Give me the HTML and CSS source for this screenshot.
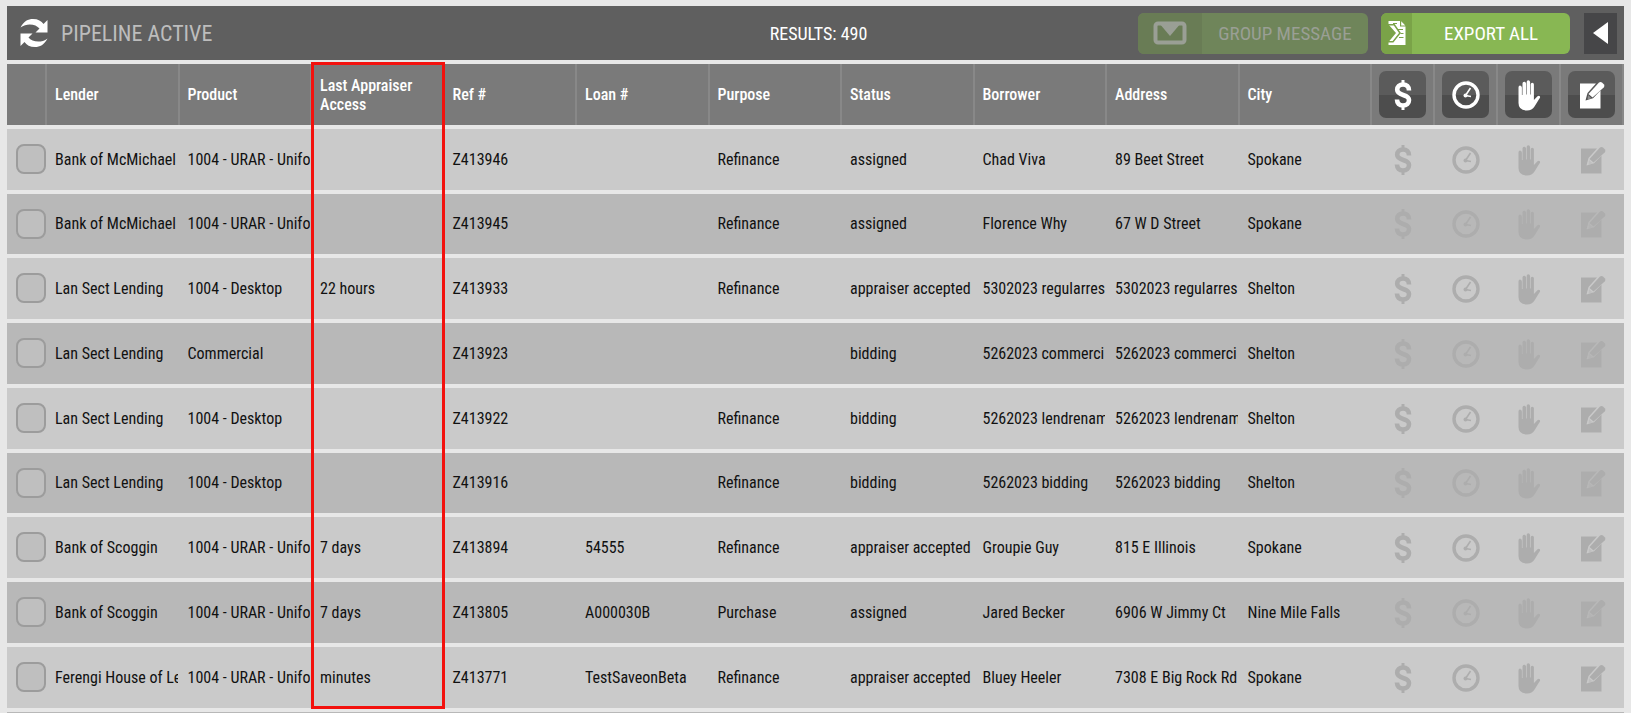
FILE: index.html
```html
<!DOCTYPE html>
<html lang="en">
<head>
  <meta charset="UTF-8" />
  <meta name="viewport" content="width=device-width, initial-scale=1.0"/>
  <title>Pipeline Active</title>
  <link rel="stylesheet" href="styles.css">
</head>
<body>
  <!-- Icons -->
  <svg class="sprite" aria-hidden="true">
    <symbol id="icon-dollar" viewBox="0 0 32 32">
      <path d="M22 11.5C22 7.5 19.5 5.5 16 5.5S10.200 7.700 10.200 10.800C10.200 17.500 22 14.500 22 21C22 24.500 19.500 26.500 16 26.500S10 24.500 10 20.500" fill="none" stroke="currentColor" stroke-width="4.600"/>
      <path d="M16 1v5M16 26v5" stroke="currentColor" stroke-width="3"/>
    </symbol>
    <symbol id="icon-clock" viewBox="0 0 32 32">
      <circle cx="16" cy="16" r="12" fill="none" stroke="currentColor" stroke-width="3.400"/>
      <path d="M20.500 9L15.500 16.500L21 17.500" fill="none" stroke="currentColor" stroke-width="1.600"/>
      <circle cx="15.500" cy="16.500" r="2" fill="currentColor"/>
    </symbol>
    <symbol id="icon-hand" viewBox="0 0 32 32">
      <path d="M5.500 8.500Q5.500 6.500 7 6.500T8.900 8.500V16H9.500V4.500Q9.500 2.700 11.200 2.700T13.100 4.500V15.500H13.700V3Q13.700 1.200 15.300 1.200T17.100 3V15.500H17.700V5.500Q17.700 3.700 19.300 3.700T20.900 5.500V21L24.500 17.300Q26 16.300 26.800 17.300T26.300 19.800L21.500 27.500Q19 31.500 14 31.500Q5.500 31.500 5.500 24Z" fill="currentColor"/>
    </symbol>
    <symbol id="icon-edit" viewBox="0 0 32 32">
      <path d="M4 4.500H20L11.500 14L9.500 21.500L17 19.300L24.500 11.500V29.500H4Z" fill="currentColor"/>
      <path d="M22.800 3.800Q24.300 2.300 26 3.600L28 5.500Q29 7 27.700 8.400L16.500 18.600L12.500 15Z" fill="currentColor"/>
      <path d="M12 16l3.500 3.200l-4 1.300z" fill="currentColor" opacity=".35"/>
    </symbol>
  </svg>

  <div class="pipeline">
    <!-- Top Bar -->
    <header class="topbar">
      <div class="topbar-left">
        <button class="refresh-btn" type="button" aria-label="Refresh">
          <svg viewBox="0 0 28 28">
            <path d="M0.500 8.500C4 2 8 0 13 0C18 0 21.500 2 23.500 5L27.500 1V13.500H15.500L19.500 9.500C16 5 7 3.500 0.500 8.500Z" fill="currentColor"/>
            <path d="M27.500 19.500C24 26 20 28 15 28C10 28 6.500 26 4.500 23L0.500 27V14.500H12.500L8.500 18.500C12 23 21 24.500 27.500 19.500Z" fill="currentColor"/>
          </svg>
        </button>
        <h1>PIPELINE ACTIVE</h1>
      </div>
      <div class="results">RESULTS: 490</div>
      <div class="topbar-right">
        <button class="action-btn group-btn" type="button" disabled>
          <span class="action-icon">
            <svg width="34" height="24" viewBox="0 0 34 24">
              <rect x="2.500" y="2.500" width="29" height="19" rx="2.500" fill="none" stroke="currentColor" stroke-width="4"/>
              <path d="M6 2h22L17 15Z" fill="currentColor"/>
            </svg>
          </span>
          <span class="action-text">GROUP MESSAGE</span>
        </button>
        <button class="action-btn export-btn" type="button">
          <span class="action-icon">
            <svg width="18" height="24" viewBox="0 0 18 24">
              <path d="M0.500 0H12V5.500H17.500V24H0.500V21L8 12L0.500 3.500Z" fill="currentColor"/>
              <path d="M13.200 0.300L17.300 4.400H13.200Z" fill="currentColor"/>
              <path d="M0 3.800H6.300L12 12L5 20.800H0" fill="none" stroke="#7aa348" stroke-width="1.500"/>
              <path d="M9 8.500h6M12.500 12.500h3M11 16.500h4.500M5 2.500h4" fill="none" stroke="#7aa348"/>
            </svg>
          </span>
          <span class="action-text">EXPORT ALL</span>
        </button>
        <button class="collapse-btn" type="button" aria-label="Collapse">
          <svg width="15" height="22" viewBox="0 0 15 22"><path d="M15 0V22L0 11Z" fill="currentColor"/></svg>
        </button>
      </div>
    </header>

    <!-- Orders -->
    <table class="orders">
      <colgroup>
        <col class="col-check">
        <col span="10">
        <col class="col-icon" span="3">
        <col class="col-last">
      </colgroup>
      <thead>
        <tr>
          <th></th>
          <th>Lender</th>
          <th>Product</th>
          <th class="highlighted">Last Appraiser Access<span class="highlight"></span></th>
          <th>Ref #</th>
          <th>Loan #</th>
          <th>Purpose</th>
          <th>Status</th>
          <th>Borrower</th>
          <th>Address</th>
          <th>City</th>
          <th class="icon-cell"><button class="head-btn" type="button" aria-label="Payment"><svg><use href="#icon-dollar"/></svg></button></th>
          <th class="icon-cell"><button class="head-btn" type="button" aria-label="Due"><svg><use href="#icon-clock"/></svg></button></th>
          <th class="icon-cell"><button class="head-btn" type="button" aria-label="Hold"><svg><use href="#icon-hand"/></svg></button></th>
          <th class="icon-cell"><button class="head-btn" type="button" aria-label="Notes"><svg><use href="#icon-edit"/></svg></button></th>
        </tr>
      </thead>
      <tbody id="orders-body"></tbody>
    </table>
  </div>

  <script src="script.js"></script>
</body>
</html>
```
FILE: styles.css
```css
* {
  box-sizing: border-box;
}

body {
  margin: 0;
  padding: 6px 7px 0;
  height: 100vh;
  overflow: hidden;
  background: #e7e7e7;
  color: #111;
  font-family: "Roboto Condensed", "Liberation Sans Narrow", Roboto, sans-serif;
  font-size: 16px;
}

button {
  border: none;
  padding: 0;
  font-family: inherit;
  cursor: pointer;
}

.sprite {
  display: none;
}

/* Top bar */
.topbar {
  display: grid;
  grid-template-columns: 1fr auto 1fr;
  align-items: center;
  height: 54px;
  padding: 0 7px 0 13px;
  background: #5f5f5f;
  color: #fff;
}

.topbar-left {
  display: flex;
  align-items: center;
  gap: 13px;
}

.refresh-btn {
  width: 28px;
  height: 28px;
  background: none;
  color: #fff;
}

.refresh-btn svg {
  display: block;
  width: 28px;
  height: 28px;
}

h1 {
  margin: 0;
  font-size: 22px;
  font-weight: 400;
  color: #bdbdbd;
}

.results {
  font-size: 18px;
}

.topbar-right {
  display: flex;
  justify-content: flex-end;
}

.action-btn {
  display: flex;
  height: 41px;
  border-radius: 6px;
  overflow: hidden;
  background: #88b753;
  color: #fff;
  font-size: 19px;
}

.action-icon {
  display: flex;
  align-items: center;
  justify-content: center;
  width: 31px;
  height: 100%;
  background: #7aa348;
}

.action-text {
  flex: 1;
  align-self: center;
  text-align: center;
  white-space: nowrap;
}

.group-btn {
  width: 230px;
  margin-right: 13px;
  background: #6f855a;
  color: #9a9f95;
  cursor: default;
}

.group-btn .action-icon {
  width: 64px;
  background: #697c55;
}

.export-btn {
  width: 189px;
  margin-right: 14px;
}

.collapse-btn {
  display: flex;
  align-items: center;
  justify-content: center;
  width: 33px;
  height: 41px;
  background: #464648;
  color: #fff;
}

/* Orders table */
.orders {
  width: 100%;
  table-layout: fixed;
  border-collapse: separate;
  border-spacing: 0 4px;
}

.col-check {
  width: 38px;
}

.col-icon {
  width: 63px;
}

.col-last {
  width: 65px;
}

th,
td {
  height: 61px;
  text-align: left;
  vertical-align: middle;
}

th {
  padding: 0 0 0 8px;
  border-left: 2px solid #888;
  background: #7a7a7a;
  color: #fff;
  font-weight: 500;
  line-height: 19px;
}

th:first-child {
  border-left: none;
}

th:last-child {
  border-right: 2px solid #888;
}

td {
  padding: 0 0 1px 10px;
  overflow: hidden;
  white-space: nowrap;
  background: #cacaca;
}

td:first-child {
  padding-left: 9px;
  overflow: visible;
}

tbody tr:nth-child(even) td {
  background: #b8b8b8;
}

tbody tr:nth-child(4n + 2) td {
  height: 60px;
}

th.icon-cell {
  padding: 0;
  text-align: center;
}

td.icon-cell {
  padding: 0 0 0 3px;
  text-align: center;
}

/* Frame around the appraiser access column */
.highlighted {
  position: relative;
}

.highlight {
  position: absolute;
  top: -2px;
  left: -1px;
  right: -2px;
  height: 647px;
  border: 3px solid #f3110d;
  pointer-events: none;
}

.head-btn {
  display: inline-flex;
  align-items: center;
  justify-content: center;
  width: 47px;
  height: 47px;
  border-radius: 7px;
  background: linear-gradient(#5b5b5b 50%, #4d4d4d 50%);
  color: #fff;
  vertical-align: middle;
}

.head-btn svg,
.row-btn svg {
  display: block;
  width: 32px;
  height: 32px;
}

.row-btn {
  display: inline-block;
  background: none;
  color: #adadad;
  vertical-align: middle;
}

.row-check {
  appearance: none;
  display: block;
  position: relative;
  width: 30px;
  height: 30px;
  margin: 0;
  border: 2px solid #9c9c9c;
  border-radius: 8px;
  background: #bfbfbf;
}
```
FILE: script.js
```js
const orders = [
  ["Bank of McMichael", "1004 - URAR - Unifo", "", "Z413946", "", "Refinance", "assigned", "Chad Viva", "89 Beet Street", "Spokane"],
  ["Bank of McMichael", "1004 - URAR - Unifo", "", "Z413945", "", "Refinance", "assigned", "Florence Why", "67 W D Street", "Spokane"],
  ["Lan Sect Lending", "1004 - Desktop", "22 hours", "Z413933", "", "Refinance", "appraiser accepted", "5302023 regularres", "5302023 regularres", "Shelton"],
  ["Lan Sect Lending", "Commercial", "", "Z413923", "", "", "bidding", "5262023 commerci", "5262023 commerci", "Shelton"],
  ["Lan Sect Lending", "1004 - Desktop", "", "Z413922", "", "Refinance", "bidding", "5262023 lendrenam", "5262023 lendrenam", "Shelton"],
  ["Lan Sect Lending", "1004 - Desktop", "", "Z413916", "", "Refinance", "bidding", "5262023 bidding", "5262023 bidding", "Shelton"],
  ["Bank of Scoggin", "1004 - URAR - Unifo", "7 days", "Z413894", "54555", "Refinance", "appraiser accepted", "Groupie Guy", "815 E Illinois", "Spokane"],
  ["Bank of Scoggin", "1004 - URAR - Unifo", "7 days", "Z413805", "A000030B", "Purchase", "assigned", "Jared Becker", "6906 W Jimmy Ct", "Nine Mile Falls"],
  ["Ferengi House of Le", "1004 - URAR - Unifo", "minutes", "Z413771", "TestSaveonBeta", "Refinance", "appraiser accepted", "Bluey Heeler", "7308 E Big Rock Rd", "Spokane"],
  ["", "", "", "", "", "", "", "", "", ""]
];

const actions = [
  { icon: "dollar", label: "Payment" },
  { icon: "clock", label: "Due" },
  { icon: "hand", label: "Hold" },
  { icon: "edit", label: "Notes" }
];

const body = document.getElementById("orders-body");

orders.forEach(order => {
  const cells = order.map(text => `<td>${text}</td>`).join("");
  const buttons = actions.map(a =>
    `<td class="icon-cell"><button class="row-btn" type="button" aria-label="${a.label} ${order[3]}"><svg><use href="#icon-${a.icon}"/></svg></button></td>`
  ).join("");
  const row = document.createElement("tr");
  row.innerHTML = `<td><input class="row-check" type="checkbox" aria-label="Select ${order[3]}"></td>${cells}${buttons}`;
  body.appendChild(row);
});
```
